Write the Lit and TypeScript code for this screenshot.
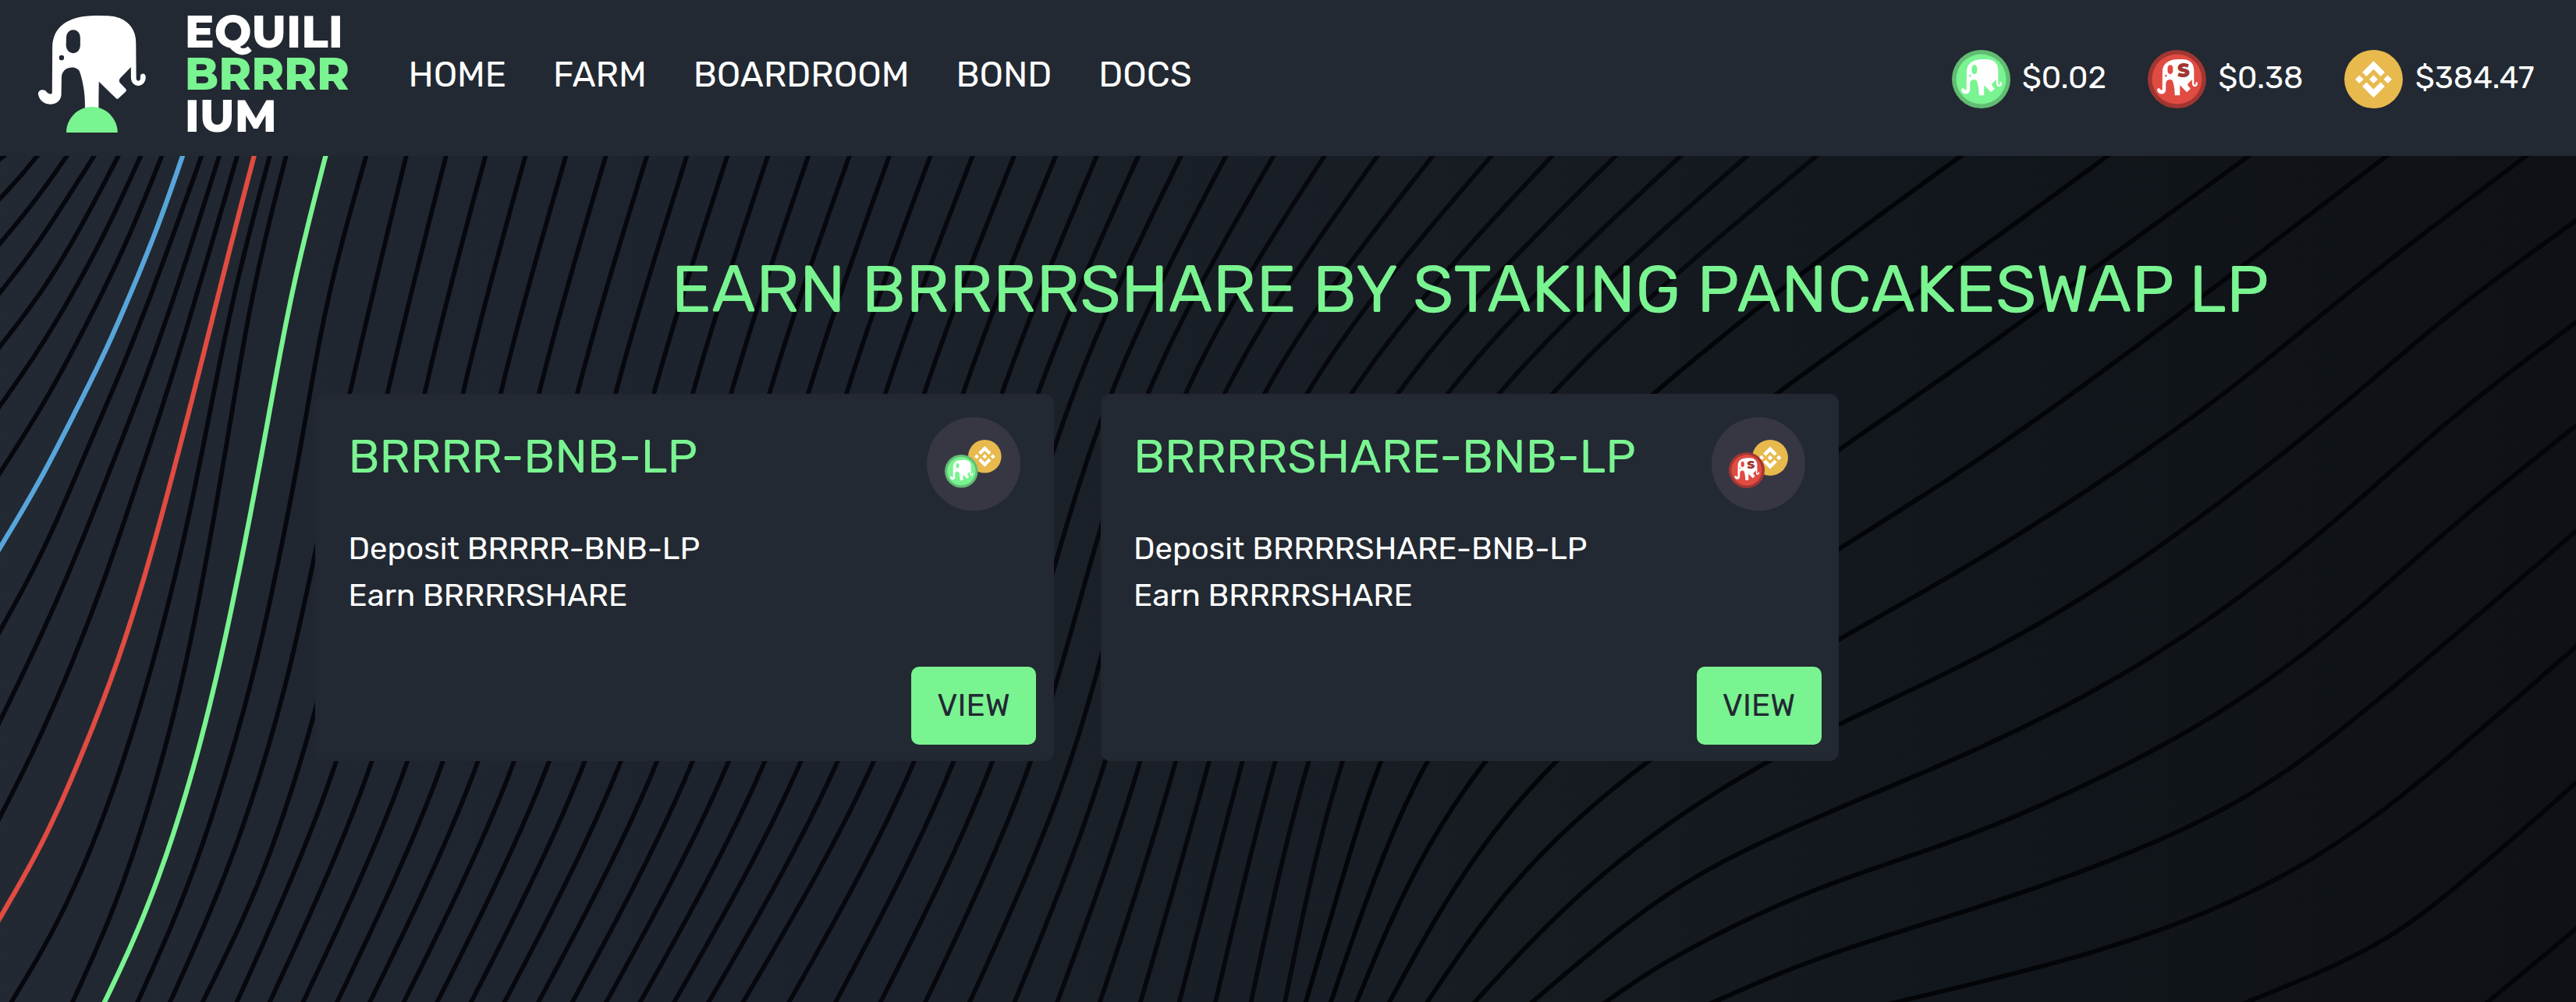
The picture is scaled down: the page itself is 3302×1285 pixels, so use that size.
import { LitElement, html, svg, css } from "lit";
import { customElement, property } from "lit/decorators.js";

type Point = [number, number];

const ELEPHANT =
  "M188 180 C190 106 240 60 345 60 C395 60 412 62 430 70 C466 86 488 118 488 165 L489 300 " +
  "C489 315 504 315 504 300 L504 292 C505 281 521 281 522 292 L523 300 C519 340 471 340 470 298 " +
  "L470 258 L432 300 C426 309 427 314 432 320 L452 343 Q455 348 452 352 L425 379 Q421 382 417 379 " +
  "L355 314 Q354 360 354 414 L305 414 C306 370 300 320 286 276 C277 252 225 252 221 295 L220 365 " +
  "C216 414 145 413 137 362 C137 342 160 342 166 352 C174 364 187 364 187 356 Z " +
  "M238 145 C239 105 287 105 288 145 L288 175 C286 215 240 215 237 175 Z " +
  "M212 222 A9 10 0 1 0 230 222 A9 10 0 1 0 212 222 Z";

const BNB =
  "M38.73 53.2l24.59-24.58 24.6 24.6 14.3-14.31L63.32 0l-38.9 38.9zM0 63.31l14.3-14.31 14.31 14.31-14.31 14.3z" +
  "M38.73 73.41l24.59 24.59 24.6-24.6 14.31 14.29-38.9 38.91-38.91-38.88zM98 63.31l14.3-14.31 14.31 14.3-14.31 14.32z" +
  "M77.83 63.3L63.32 48.78 48.8 63.3l14.52 14.53z";

/* Vertical range of the wave drawing. */
const TOP = 14.3;
const BOTTOM = 1568;

/* Curves that run through the left edge, measured on a 3 : 1.445 grid. */
const LEFT_CURVES: { color?: string; points: Point[] }[] = [
  { points: [[15, 0], [0, 6]] },
  { points: [[143, 0], [70, 42], [0, 79]] },
  { points: [[257, 0], [130, 85], [0, 162]] },
  { points: [[362, 0], [240, 92], [120, 178], [0, 253]] },
  { points: [[455, 0], [300, 140], [150, 257], [0, 353]] },
  { points: [[541, 0], [400, 145], [260, 270], [130, 372], [0, 463]] },
  { points: [[622, 0], [480, 165], [320, 323], [160, 464], [0, 587]] },
  { points: [[775, 0], [620, 206], [480, 380], [320, 561], [150, 745], [0, 880]] },
  { points: [[843, 0], [700, 216], [560, 410], [400, 610], [250, 788], [120, 927], [0, 1047]] },
  { points: [[912, 0], [780, 218], [640, 440], [500, 645], [400, 785], [250, 970], [110, 1120], [0, 1225]] },
  { points: [[1037, 0], [900, 260], [800, 492], [720, 680], [620, 880], [480, 1110], [350, 1282], [180, 1456], [45, 1567]] },
  { points: [[1100, 0], [980, 240], [890, 480], [800, 730], [700, 970], [570, 1205], [420, 1413], [280, 1567]] },
  { points: [[1408, 0], [1260, 270], [1170, 500], [1060, 775], [960, 985], [850, 1170], [700, 1378], [530, 1567]] },
  { points: [[1562, 0], [1345, 440], [1210, 740], [1110, 955], [1000, 1145], [850, 1350], [655, 1567]] },
  { points: [[1715, 0], [1490, 440], [1210, 1030], [1100, 1206], [960, 1385], [780, 1567]] },
  { color: "#57a5db", points: [[702, 0], [600, 138], [500, 257], [400, 366], [280, 483], [150, 603], [0, 726]] },
  { color: "#e04b42", points: [[977, 0], [880, 180], [780, 372], [680, 560], [580, 738], [450, 938], [300, 1125], [150, 1283], [0, 1412]] },
  { color: "#7af391", points: [[1252, 0], [1130, 240], [1030, 490], [920, 768], [800, 1030], [650, 1280], [500, 1467], [403, 1567]] },
];

/* x of each middle curve at y = TOP, 450, 1127 and BOTTOM. */
const MIDDLE_CURVES = [
  [887, 776, 614, 433], [960, 846, 679, 493], [1034, 915, 744, 554], [1107, 985, 809, 616],
  [1182, 1055, 873, 676], [1255, 1125, 939, 738], [1329, 1195, 1003, 799], [1403, 1266, 1068, 861],
  [1477, 1336, 1134, 922], [1552, 1406, 1200, 984], [1625, 1477, 1265, 1046], [1700, 1547, 1331, 1108],
  [1777, 1618, 1397, 1170], [1853, 1689, 1463, 1232], [1929, 1760, 1530, 1295], [2004, 1831, 1596, 1358],
  [2080, 1897, 1670, 1442], [2158, 1962, 1742, 1527], [2240, 2031, 1813, 1609], [2327, 2098, 1883, 1691],
  [2420, 2167, 1955, 1772], [2517, 2238, 2019, 1854], [2618, 2311, 2083, 1932], [2725, 2389, 2148, 2010],
  [2836, 2470, 2209, 2084], [2952, 2555, 2270, 2155], [3071, 2646, 2330, 2221], [3192, 2740, 2391, 2286],
  [3319, 2838, 2453, 2348],
];

const RIGHT_CURVES: Point[][] = [
  [[3583, TOP], [3319, 210], [3136, 355], [3023, 450], [2523, 1127], [2452, 1344], [2386, BOTTOM]],
  [[3851, TOP], [3566, 222], [3248, 450], [2608, 1127], [2511, 1344], [2432, BOTTOM]],
  [[4109, TOP], [3776, 258], [3566, 410], [3359, 555], [2714, 1127], [2578, 1344], [2479, BOTTOM]],
  [[4361, TOP], [4056, 248], [3776, 458], [3566, 604], [3359, 737], [2843, 1127], [2668, 1344], [2539, BOTTOM]],
  [[4616, TOP], [4296, 262], [4056, 456], [3776, 653], [3566, 784], [3359, 903], [3011, 1127], [2773, 1344], [2608, BOTTOM]],
  [[4704, 135], [4481, 302], [4296, 458], [4056, 650], [3776, 843], [3566, 959], [3359, 1059], [3136, 1183], [2888, 1370], [2695, BOTTOM]],
  [[4704, 322], [4481, 496], [4296, 658], [4056, 850], [3776, 1023], [3566, 1124], [3346, 1218], [3136, 1317], [2953, 1440], [2800, BOTTOM]],
  [[4704, 512], [4481, 695], [4296, 857], [4056, 1035], [3776, 1185], [3566, 1273], [3346, 1351], [3136, 1445], [3028, 1505], [2934, BOTTOM]],
  [[4704, 706], [4481, 898], [4296, 1053], [4056, 1217], [3776, 1338], [3566, 1409], [3346, 1480], [3136, 1566]],
  [[4704, 918], [4481, 1112], [4296, 1258], [4056, 1392], [3776, 1490], [3466, BOTTOM]],
  [[4704, 1168], [4481, 1362], [4296, 1486], [4106, BOTTOM]],
  [[4704, 1436], [4546, BOTTOM]],
];

/* Natural cubic spline x(y), sampled to a path and extended past both ends. */
function curvePath(source: Point[]): string {
  const p = [...source].sort((a, b) => a[1] - b[1]);
  const n = p.length;
  const m = new Array<number>(n).fill(0);
  const c = new Array<number>(n).fill(0);
  const d = new Array<number>(n).fill(0);
  for (let i = 1; i < n - 1; i++) {
    const h0 = p[i][1] - p[i - 1][1];
    const h1 = p[i + 1][1] - p[i][1];
    const r = 6 * ((p[i + 1][0] - p[i][0]) / h1 - (p[i][0] - p[i - 1][0]) / h0);
    const w = 2 * (h0 + h1) - h0 * c[i - 1];
    c[i] = h1 / w;
    d[i] = (r - h0 * d[i - 1]) / w;
  }
  for (let i = n - 2; i > 0; i--) m[i] = d[i] - c[i] * m[i + 1];
  const out: Point[] = [];
  for (let i = 0; i < n - 1; i++) {
    const h = p[i + 1][1] - p[i][1];
    const steps = Math.max(2, Math.ceil(h / 12));
    for (let s = i === 0 ? 0 : 1; s <= steps; s++) {
      const b = s / steps;
      const a = 1 - b;
      const x = a * p[i][0] + b * p[i + 1][0] + (((a ** 3 - a) * m[i] + (b ** 3 - b) * m[i + 1]) * h * h) / 6;
      out.push([x, p[i][1] + b * h]);
    }
  }
  const extend = (a: Point, b: Point): Point => {
    const k = 24 / Math.hypot(a[0] - b[0], a[1] - b[1]);
    return [a[0] + (a[0] - b[0]) * k, a[1] + (a[1] - b[1]) * k];
  };
  const last = out.length - 1;
  const all = [extend(out[0], out[1]), ...out, extend(out[last], out[last - 1])];
  return "M" + all.map(([x, y]) => `${x.toFixed(1)} ${y.toFixed(1)}`).join("L");
}

@customElement("wave-backdrop")
class WaveBackdrop extends LitElement {
  static styles = css`
    :host { display: block; background: linear-gradient(90deg, #222932 0%, #1c222b 34%, #171c23 58%, #12171d 76%, #0e1115 100%); }
    svg { display: block; width: 100%; height: 100%; }
    path { fill: none; stroke: #06080d; stroke-width: 8.2; stroke-linejoin: round; }
    .far { stroke: #030508; }
    .accent { stroke-width: 8.8; }
  `;
  render() {
    const left = LEFT_CURVES.map((c) => ({
      color: c.color,
      d: curvePath(c.points.map(([x, y]): Point => [x * 0.4752, y * 0.991 + TOP])),
    }));
    const middle = MIDDLE_CURVES.map((x) => curvePath([[x[0], TOP], [x[1], 450], [x[2], 1127], [x[3], BOTTOM]]));
    return html`<svg viewBox="0 14.3 4707 1553.7" preserveAspectRatio="none" aria-hidden="true">
      ${left.map((l) => (l.color ? svg`<path class="accent" d=${l.d} style="stroke:${l.color}"></path>` : svg`<path d=${l.d}></path>`))}
      ${middle.map((d) => svg`<path d=${d}></path>`)}
      ${RIGHT_CURVES.map((c) => svg`<path class="far" d=${curvePath(c)}></path>`)}
    </svg>`;
  }
}

@customElement("token-coin")
class TokenCoin extends LitElement {
  @property() kind = "brrrr";
  static styles = css`
    :host { display: block; }
    svg { display: block; width: 100%; height: 100%; }
    .mark { font: 900 24px Montserrat, Inter, "Liberation Sans", sans-serif; }
  `;
  render() {
    if (this.kind === "bnb") {
      return html`<svg viewBox="0 0 75 75"><circle cx="37.5" cy="37.5" r="37.5" fill="#e8b94d"></circle>
        <path d=${BNB} fill="#fff" transform="translate(14 14.2) scale(.371)"></path></svg>`;
    }
    const share = this.kind === "share";
    return html`<svg viewBox="0 0 75 75">
      <circle cx="37.5" cy="37.5" r="37.5" fill=${share ? "#a03632" : "#62bc72"}></circle>
      <circle cx="37.5" cy="37.5" r="32" fill=${share ? "#e04b42" : "#7af391"}></circle>
      <path d=${ELEPHANT} fill="#fff" fill-rule="evenodd" transform="translate(-6.45 4.16) scale(.1347 .1307)"></path>
      ${share ? svg`<text class="mark" x="46" y="34.5" text-anchor="middle" fill="#a03632">S</text>` : null}
    </svg>`;
  }
}

@customElement("farm-card")
class FarmCard extends LitElement {
  @property() pair = "";
  @property() kind = "brrrr";
  static styles = css`
    :host { display: flex; flex-direction: column; box-sizing: border-box; width: 946.5px; height: 471px;
      padding: 27px 19.5px 18px 39.5px; border: 3px solid #242731; border-radius: 12px; background: #222932; color: #fff; }
    .top { display: flex; justify-content: space-between; height: 120px; padding-right: 20.5px; }
    .title { margin: 11px 0 0 0; font-size: 60px; line-height: 80px; font-weight: 400; color: #7af391; white-space: nowrap; }
    .badge { position: relative; width: 120px; height: 120px; border-radius: 50%; background: #373743; }
    .coin { position: absolute; width: 42.6px; height: 42.6px; }
    .coin.back { left: 53.5px; top: 29px; }
    .coin.front { left: 23.5px; top: 48px; }
    .share .coin { width: 46px; height: 46px; }
    .share .coin.back { left: 51.5px; top: 29px; }
    .share .coin.front { left: 22px; top: 45px; }
    .info { margin-top: 19px; font-size: 40px; line-height: 60px; white-space: nowrap; }
    .view { margin-top: auto; align-self: flex-end; width: 160px; height: 100px; border: 0; border-radius: 10px; padding: 0 0 2px;
      background: #7af391; color: #222932; font: 400 40px Rubik, Roboto, sans-serif; }
  `;
  render() {
    return html`
      <div class="top">
        <h2 class="title">${this.pair}</h2>
        <div class="badge ${this.kind}">
          <token-coin class="coin back" kind="bnb"></token-coin>
          <token-coin class="coin front" kind=${this.kind}></token-coin>
        </div>
      </div>
      <div class="info"><div>Deposit ${this.pair}</div><div>Earn BRRRRSHARE</div></div>
      <button class="view">VIEW</button>
    `;
  }
}

@customElement("app-root")
class AppRoot extends LitElement {
  static styles = css`
    :host { display: flex; flex-direction: column; height: 1285px; overflow: hidden; color: #fff; font-family: Rubik, Roboto, sans-serif; }
    .header { display: flex; box-sizing: border-box; height: 200px; background: #222932; padding: 0 53.5px 0 49px; }
    .brand { flex: none; width: 474.5px; height: 170px; }
    .brand svg { display: block; width: 420px; height: 175px; overflow: visible; }
    .word { font: 800 57px Montserrat, Inter, "Open Sans", sans-serif; fill: #fff; }
    .word.green { fill: #7af391; }
    .nav { display: flex; gap: 60px; padding-top: 66px; font-size: 45px; line-height: 60px; }
    .prices { display: flex; margin-left: auto; padding-top: 64px; gap: 53px; }
    .price { display: flex; align-items: center; gap: 15.5px; height: 75px; font-size: 40px; }
    .price span { padding-bottom: 4px; }
    .price token-coin { width: 75px; height: 75px; }
    .stage { position: relative; flex: 1; }
    .backdrop { position: absolute; inset: 0; }
    .content { position: relative; padding-left: 404px; }
    .heading { margin: 0; padding: 121px 0 84px 456.5px; font-size: 85px; line-height: 100px; font-weight: 400; color: #7af391; white-space: nowrap; }
    .cards { display: flex; gap: 60px; }
  `;
  render() {
    return html`
      <header class="header">
        <div class="brand">
          <svg viewBox="49 0 420 175">
            <g transform="scale(.35714 .33333)">
              <path d=${ELEPHANT} fill="#fff" fill-rule="evenodd"></path>
              <path d="M238 510 C238 458 277 411 330 411 C383 411 422 458 422 510 Z" fill="#7af391"></path>
            </g>
            <text class="word" x="236.8" y="61" textLength="203" lengthAdjust="spacingAndGlyphs">EQUILI</text>
            <text class="word green" x="236.8" y="115" textLength="211" lengthAdjust="spacingAndGlyphs">BRRRR</text>
            <text class="word" x="236.8" y="169" textLength="118" lengthAdjust="spacingAndGlyphs">IUM</text>
          </svg>
        </div>
        <nav class="nav">${["HOME", "FARM", "BOARDROOM", "BOND", "DOCS"].map((t) => html`<span>${t}</span>`)}</nav>
        <div class="prices">
          ${[["brrrr", "$0.02"], ["share", "$0.38"], ["bnb", "$384.47"]].map(
            ([k, v]) => html`<div class="price"><token-coin kind=${k}></token-coin><span>${v}</span></div>`
          )}
        </div>
      </header>
      <main class="stage">
        <wave-backdrop class="backdrop"></wave-backdrop>
        <div class="content">
          <h1 class="heading">EARN BRRRRSHARE BY STAKING PANCAKESWAP LP</h1>
          <div class="cards">
            <farm-card pair="BRRRR-BNB-LP" kind="brrrr"></farm-card>
            <farm-card pair="BRRRRSHARE-BNB-LP" kind="share"></farm-card>
          </div>
        </div>
      </main>
    `;
  }
}
